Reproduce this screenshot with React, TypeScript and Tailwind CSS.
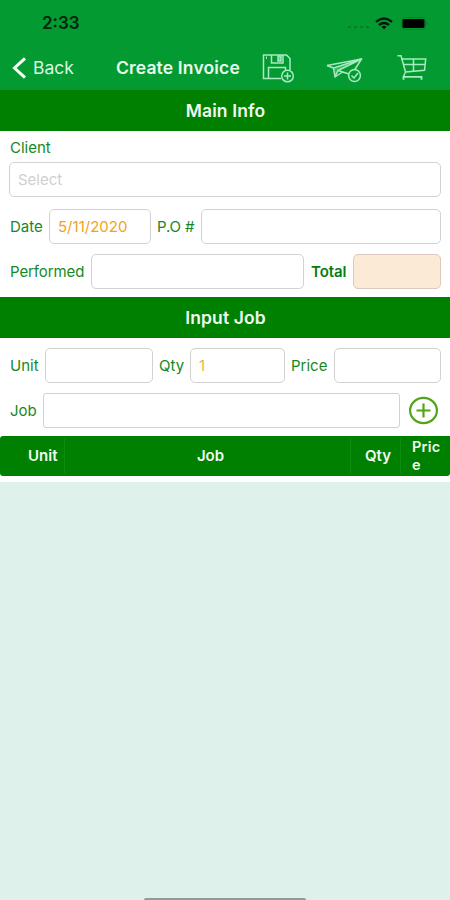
import React from 'react';

const LABEL = 'shrink-0 whitespace-nowrap text-[15px] leading-[20px] text-[#16881f]';
const FIELD = 'h-[35px] min-w-0 rounded-[5px] border border-[#d2d2d2] bg-white px-[8px] pt-px text-[15px] leading-[32px]';

function StatusBar() {
    return (
        <div className="flex h-[46px] items-center pl-[42px] pr-[22px]">
            <span className="w-[60px] text-[17px] font-semibold leading-[20px] text-[#03250d]">2:33</span>
            <div className="ml-auto flex items-center">
                <svg className="mr-[6px] mt-[4px] h-[14px] w-[21px]" viewBox="0 0 21 14" fill="#087529">
                    <rect x="0" y="8" width="3" height="2" rx="1" />
                    <rect x="6" y="8" width="3" height="2" rx="1" />
                    <rect x="12" y="8" width="3" height="2" rx="1" />
                    <rect x="18" y="8" width="3" height="2" rx="1" />
                </svg>
                <svg className="mr-[8px] h-[13px] w-[18px]" viewBox="0 0 18 13" fill="none" stroke="#02180a" strokeWidth="2.4">
                    <path d="M1 4.8 Q9 -2 17 4.8" />
                    <path d="M4 8 Q9 3.8 14 8" />
                    <path d="M6.4 9.6 Q9 7.8 11.6 9.6 L9 12.4 Z" fill="#02180a" stroke="none" />
                </svg>
                <svg className="h-[13px] w-[27px]" viewBox="0 0 27 13">
                    <rect x="0.5" y="0.5" width="24" height="12" rx="3" fill="none" stroke="#06812b" />
                    <rect x="1.5" y="2" width="22" height="9" rx="1.5" fill="#000" />
                    <path d="M25.5 4.5 Q27.5 6.5 25.5 8.5 Z" fill="#06702a" />
                </svg>
            </div>
        </div>
    );
}

function SaveIcon() {
    return (
        <svg className="h-[30px] w-[33px]" viewBox="0 0 33 30" fill="none" stroke="#a8eac1" strokeWidth="1.5">
            <path d="M19 25.5 H1.5 V2 H24.5 L28 5.5 V17" />
            <path d="M9.5 2 V10 H21 V2" />
            <path d="M16 3 H19 V8 H16 Z" fill="#a8eac1" fillOpacity="0.6" />
            <path d="M6.5 25 V14.5 H23.5 V17" />
            <path d="M4.5 3.5 V6" strokeWidth="1" />
            <circle cx="25.5" cy="23" r="5.8" />
            <path d="M22 23 H29 M25.5 19.5 V26.5" />
        </svg>
    );
}

function SendIcon() {
    return (
        <svg className="h-[26px] w-[37px]" viewBox="0 0 37 26" fill="none" stroke="#a8eac1" strokeWidth="1.5" strokeLinejoin="round">
            <path d="M1 8.5 L35.5 2 L28.5 13" />
            <path d="M1 8.5 L7.5 11 L35.5 2 L12 13.5 L9 20 L7.5 11" />
            <path d="M8 11 L35.5 2 L12 13.5 L9 18 Z" fill="#a8eac1" fillOpacity="0.35" stroke="none" />
            <path d="M12 13.5 L23 17 M9 20 L16.5 15" />
            <circle cx="28.5" cy="18.5" r="5.9" />
            <path d="M25.5 18.5 L28 21 L32 16" />
        </svg>
    );
}

function CartIcon() {
    return (
        <svg className="h-[28px] w-[30px]" viewBox="0 0 30 28" fill="none" stroke="#a8eac1" strokeWidth="1.5">
            <path d="M0.5 1.8 H4 L8.5 18 L6.5 22.5" />
            <path d="M4.8 5 H28.7 L27.5 16.3 L8.5 18" />
            <path d="M6.5 10.5 H28 M16.5 5 V17" />
            <path d="M6.5 25.8 V22.8 H24.5 V25.8" strokeWidth="1.8" />
        </svg>
    );
}

function NavBar() {
    return (
        <div className="flex h-[44px] items-center">
            <svg className="ml-[12px] h-[22px] w-[15px] shrink-0" viewBox="0 0 15 22" fill="none" stroke="#f4fff8" strokeWidth="3">
                <path d="M13 1.3 L2.5 11 L13 20.7" />
            </svg>
            <span className="ml-[6px] w-[83px] shrink-0 text-[17.5px] leading-[22px] text-[#d9f8e4]">Back</span>
            <h1 className="w-[146px] shrink-0 whitespace-nowrap text-[17.5px] font-semibold leading-[22px] tracking-[0.15px] text-[#e6fbed]">Create Invoice</h1>
            <div className="flex items-center">
                <SaveIcon />
                <div className="ml-[31px] mt-[4px]"><SendIcon /></div>
                <div className="ml-[34px]"><CartIcon /></div>
            </div>
        </div>
    );
}

function SectionTitle({ title }: { title: string }) {
    return (
        <h2 className="flex h-[41px] items-center justify-center bg-[#008000] pl-px pt-px text-[17.5px] font-semibold tracking-[0.1px] text-[#f0fbf0]">
            {title}
        </h2>
    );
}

function MainInfo() {
    return (
        <div className="flex h-[166px] flex-col bg-white px-[9px] pt-[7px]">
            <span className={`${LABEL} pl-px`}>Client</span>
            <div className={`${FIELD} mt-[4px] text-[#cfcfcf]`}>Select</div>
            <div className="mt-[12px] flex items-center">
                <span className={`${LABEL} w-[40px] pl-px`}>Date</span>
                <div className={`${FIELD} w-[102px] text-[#efa31d]`}>5/11/2020</div>
                <span className={`${LABEL} ml-[6px] w-[44px] tracking-[-0.1px]`}>P.O #</span>
                <div className={`${FIELD} flex-1`} />
            </div>
            <div className="mt-[10px] flex items-center">
                <span className={`${LABEL} w-[82px] pl-px tracking-[-0.1px]`}>Performed</span>
                <div className={`${FIELD} w-[213px]`} />
                <span className="ml-[7px] w-[42px] shrink-0 text-[15px] font-semibold leading-[20px] tracking-[-0.1px] text-[#087c10]">Total</span>
                <div className="h-[35px] flex-1 rounded-[5px] border border-[#dcc8bc] bg-[#fbead6]" />
            </div>
        </div>
    );
}

function InputJob() {
    return (
        <div className="h-[98px] bg-white px-[9px] pt-[10px]">
            <div className="flex items-center">
                <span className={`${LABEL} w-[36px] pl-px`}>Unit</span>
                <div className={`${FIELD} w-[108px]`} />
                <span className={`${LABEL} ml-[6px] w-[31px]`}>Qty</span>
                <div className={`${FIELD} w-[95px] text-[#edb637]`}>1</div>
                <span className={`${LABEL} ml-[6px] w-[43px]`}>Price</span>
                <div className={`${FIELD} flex-1`} />
            </div>
            <div className="mt-[10px] flex items-center">
                <span className={`${LABEL} w-[34px] pl-px`}>Job</span>
                <div className="h-[35px] w-[357px] rounded-[3px] border border-[#d2d2d2]" />
                <svg className="ml-[9px] h-[30px] w-[30px]" viewBox="0 0 30 30" fill="none" stroke="#55a418" strokeWidth="2.2">
                    <ellipse cx="14.5" cy="14.5" rx="13.4" ry="12.6" />
                    <path d="M7.5 14.5 H21.5 M14.5 7.5 V21.5" />
                </svg>
            </div>
        </div>
    );
}

function JobTable() {
    return (
        <div className="bg-white pb-[6px]">
            <div className="flex h-[40px] items-center rounded-b-[3px] rounded-tl-[3px] bg-[#008000] text-[15px] font-semibold text-[#f0fbf0]">
                <div className="flex h-[36px] w-[65px] items-center border-r border-[#0d8c0d] pl-[28px]">Unit</div>
                <div className="flex h-[36px] w-[286px] items-center justify-center border-r border-[#0d8c0d] pl-[6px]">Job</div>
                <div className="flex h-[36px] w-[50px] items-center border-r border-[#0d8c0d] pl-[14px]">Qty</div>
                <div className="flex flex-col pl-[11px] text-[14.5px] leading-[18px] tracking-[0.2px]">Pric<br />e</div>
            </div>
        </div>
    );
}

export default function App() {
    return (
        <div className="flex h-[900px] w-[450px] flex-col overflow-hidden bg-[#def2eb] font-['Inter','Liberation_Sans',sans-serif]">
            <header className="h-[90px] shrink-0 bg-[#049a32]">
                <StatusBar />
                <NavBar />
            </header>
            <SectionTitle title="Main Info" />
            <MainInfo />
            <SectionTitle title="Input Job" />
            <InputJob />
            <JobTable />
            <div className="mx-auto mt-auto h-[2px] w-[162px] rounded-t-full bg-[#8e9b97]" />
        </div>
    );
}
